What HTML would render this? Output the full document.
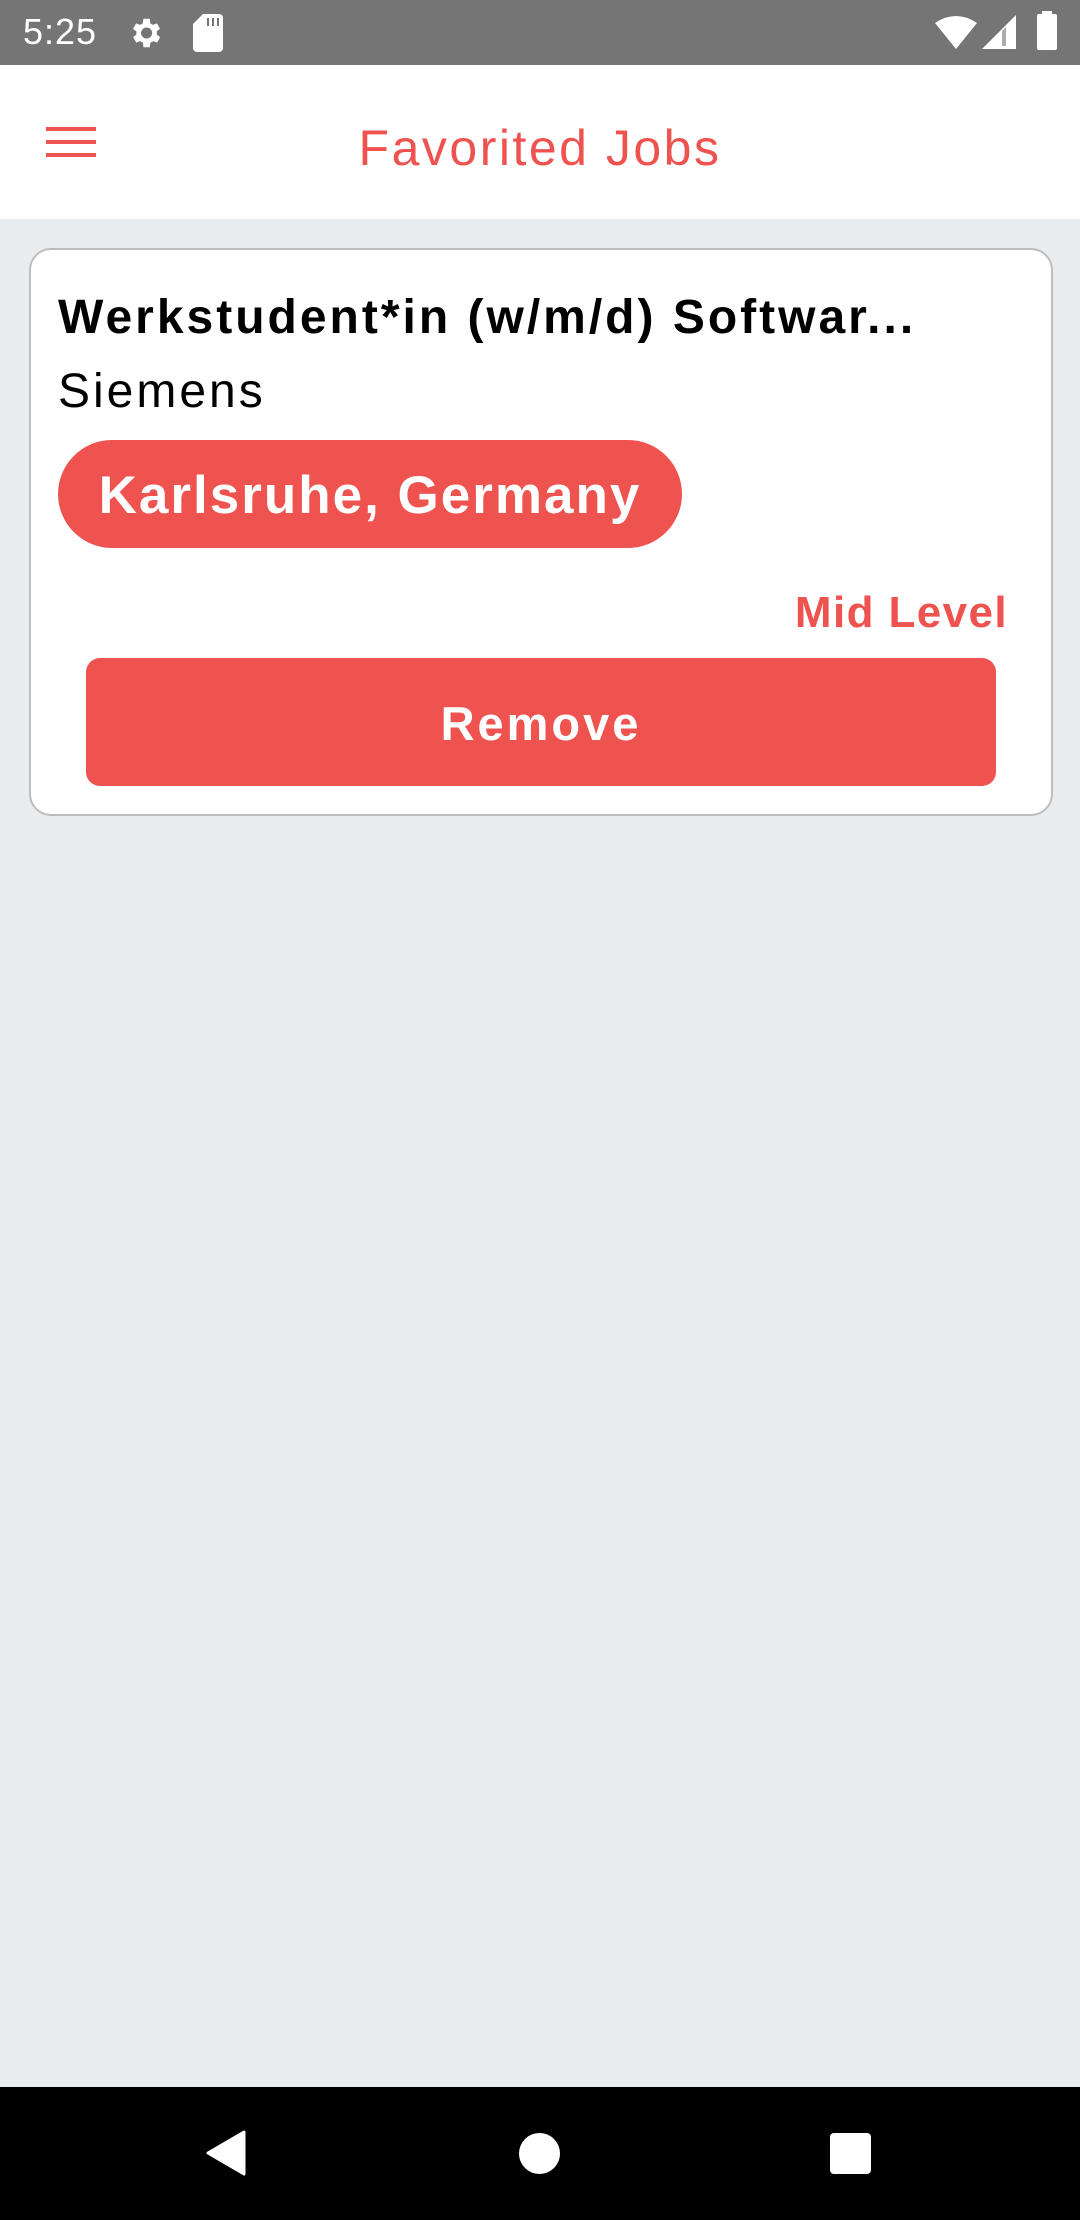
<!DOCTYPE html>
<html><head><meta charset="utf-8"><style>
*{margin:0;padding:0;box-sizing:border-box}
body{width:1080px;height:2220px;background:#e9edf0;font-family:"Liberation Sans",Arial,sans-serif;position:relative;overflow:hidden}
.abs{position:absolute}
</style></head><body>
<div class="abs" style="left:0;top:0;width:1080px;height:65px;background:#757575"></div>
<div class="abs" style="left:23px;top:11px;color:#fff;font-size:36px;letter-spacing:1px">5:25</div>
<svg class="abs" style="left:126px;top:14px" width="38" height="38" viewBox="0 0 24 24"><path fill="#fff" d="M19.4 13a7.5 7.5 0 0 0 0-2l2.1-1.6-2-3.5-2.5 1a7 7 0 0 0-1.7-1L15 3h-4l-.4 2.9a7 7 0 0 0-1.7 1l-2.5-1-2 3.5L6.6 11a7.5 7.5 0 0 0 0 2l-2.1 1.6 2 3.5 2.5-1a7 7 0 0 0 1.7 1L11 21h4l.4-2.9a7 7 0 0 0 1.7-1l2.5 1 2-3.5zM13 15.5a3.5 3.5 0 1 1 0-7 3.5 3.5 0 0 1 0 7z"/></svg>
<svg class="abs" style="left:193px;top:14px" width="30" height="38" viewBox="0 0 15 19"><path fill="#fff" d="M5 0h8a2 2 0 0 1 2 2v15a2 2 0 0 1-2 2H2a2 2 0 0 1-2-2V5z"/><path fill="#757575" d="M7 2h1v4H7zM9.5 2h1v4h-1zM12 2h1v4h-1z"/></svg>
<svg class="abs" style="left:935px;top:15px" width="42" height="34" viewBox="0 0 42 34"><path fill="#fff" d="M0 8 Q21 -6 42 8 L21 34z"/></svg>
<svg class="abs" style="left:982px;top:15px" width="34" height="34" viewBox="0 0 34 34"><path fill="#fff" d="M34 0v34H0z"/><path fill="#757575" d="M24 12v19h-4V16z" opacity=".6"/></svg>
<div class="abs" style="left:1037px;top:14px;width:20px;height:36px;background:#fff;border-radius:2px"></div>
<div class="abs" style="left:1042px;top:11px;width:10px;height:4px;background:#fff"></div>

<div class="abs" style="left:0;top:65px;width:1080px;height:154px;background:#fff"></div>
<div class="abs" style="left:46px;top:127px;width:50px;height:4px;background:#ef5350"></div>
<div class="abs" style="left:46px;top:140px;width:50px;height:4px;background:#ef5350"></div>
<div class="abs" style="left:46px;top:153px;width:50px;height:4px;background:#ef5350"></div>
<div class="abs" style="left:0;top:119px;width:1080px;text-align:center;color:#ef5350;font-size:50px;letter-spacing:2.5px">Favorited Jobs</div>

<div class="abs" style="left:29px;top:248px;width:1024px;height:568px;background:#fff;border:2px solid #bdbdbd;border-radius:22px"></div>
<div class="abs" style="left:58px;top:290px;font-size:48px;font-weight:bold;color:#000;letter-spacing:3px">Werkstudent*in (w/m/d) Softwar...</div>
<div class="abs" style="left:58px;top:364px;font-size:48px;color:#000;letter-spacing:3px">Siemens</div>
<div class="abs" style="left:58px;top:440px;width:624px;height:108px;background:#ef5350;border-radius:54px;color:#fff;font-weight:bold;font-size:53px;line-height:112px;text-align:center;letter-spacing:2px">Karlsruhe, Germany</div>
<div class="abs" style="right:72px;top:588px;font-size:44px;font-weight:bold;color:#ef5350;letter-spacing:1.4px">Mid Level</div>
<div class="abs" style="left:86px;top:658px;width:910px;height:128px;background:#ef5350;border-radius:14px;color:#fff;font-weight:bold;font-size:47px;line-height:132px;text-align:center;letter-spacing:3px">Remove</div>

<div class="abs" style="left:0;top:2087px;width:1080px;height:133px;background:#000"></div>
<svg class="abs" style="left:204px;top:2130px" width="44" height="46" viewBox="0 0 44 46"><path fill="#fff" d="M40 2 L4 23 L40 44z" stroke="#fff" stroke-width="3" stroke-linejoin="round"/></svg>
<div class="abs" style="left:519px;top:2133px;width:41px;height:41px;border-radius:50%;background:#fff"></div>
<div class="abs" style="left:830px;top:2133px;width:41px;height:41px;border-radius:4px;background:#fff"></div>
</body></html>
